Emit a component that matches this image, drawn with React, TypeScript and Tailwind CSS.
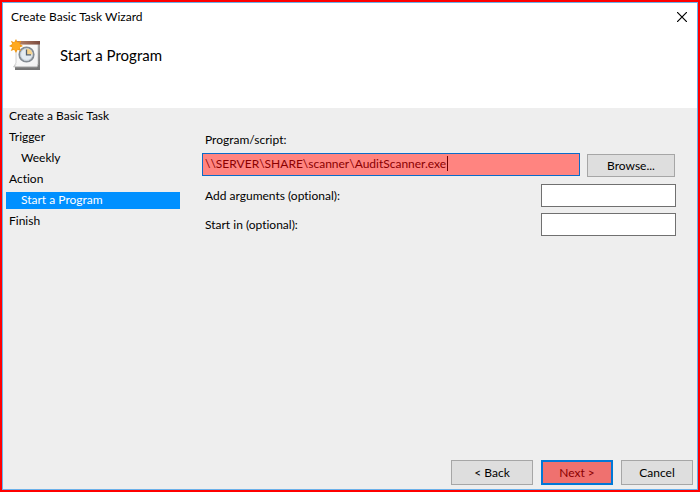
import { useState } from "react";

const steps = [
  { name: "Create a Basic Task", nested: false },
  { name: "Trigger", nested: false },
  { name: "Weekly", nested: true },
  { name: "Action", nested: false },
  { name: "Start a Program", nested: true },
  { name: "Finish", nested: false },
];

function TaskIcon() {
  return (
    <svg width="32" height="32" viewBox="0 0 32 32" aria-hidden="true">
      <defs>
        <linearGradient id="sheet" x1="0" y1="0" x2="1" y2="1">
          <stop offset="0" stopColor="#ffffff" />
          <stop offset="1" stopColor="#f0f0f0" />
        </linearGradient>
        <linearGradient id="band" x1="0" y1="0" x2="1" y2="0">
          <stop offset="0" stopColor="#b98468" />
          <stop offset="1" stopColor="#7a4a3e" />
        </linearGradient>
        <linearGradient id="edge" x1="0" y1="0" x2="0" y2="1">
          <stop offset="0" stopColor="#a8a8a8" />
          <stop offset="1" stopColor="#747474" />
        </linearGradient>
      </defs>
      <path d="M28 3H31V31H6V28H28Z" fill="url(#edge)" />
      <path d="M7 5H29V25L28 28H4.500L7 24Z" fill="url(#sheet)" stroke="#b4b4b4" strokeWidth="0.6" />
      <path d="M7 25.500L5 27.500H28L29 25.500" fill="none" stroke="#c4c4c4" strokeWidth="0.8" />
      <rect x="8" y="2" width="23" height="3.5" fill="url(#band)" />
      <circle cx="17.5" cy="15.5" r="7.2" fill="#e3ebf1" stroke="#848b92" strokeWidth="1.8" />
      <circle cx="17.5" cy="15.5" r="5.9" fill="none" stroke="#c3ccd3" strokeWidth="0.8" />
      <path d="M17.500 15.500V9.500A6 6 0 0 1 23.500 15.500Z" fill="#f8d58d" />
      <path d="M17.500 10.500V15.800H22" fill="none" stroke="#56616c" strokeWidth="1.3" />
      <path
        d="M7 0L8.600 3.300L12.200 1.700L10.800 5.100L14 7L10.800 8.600L12 12L8.600 10.700L7 14L5.200 10.700L1.700 12L3.200 8.600L0 7L3.200 5.100L1.900 1.700L5.200 3.300Z"
        fill="#f39a13"
      />
      <circle cx="7" cy="7" r="4" fill="#ffa91e" />
    </svg>
  );
}

const buttonBase = "shrink-0 border text-center text-xs leading-4";
const plainButton = "border-[#a6a6a6] bg-[#dedede]";
const optionalBox = "h-[23px] w-[135px] border border-[#707070] bg-white px-1 text-xs outline-none";

export default function App() {
  const [program, setProgram] = useState("\\\\SERVER\\SHARE\\scanner\\AuditScanner.exe");
  const [args, setArgs] = useState("");
  const [startIn, setStartIn] = useState("");

  return (
    <div className="min-h-screen flex border-2 border-[#ff0000] font-[Lato,sans-serif] text-xs leading-4 text-black [font-variant-ligatures:none]">
      <div className="flex grow flex-col border border-[#6ab0ea] bg-[#eeeeee]">
        <header className="h-[105px] bg-white">
          <div className="flex items-center justify-between pt-1.5 pr-2.5 pl-2">
            <h1>Create Basic Task Wizard</h1>
            <button type="button" aria-label="Close">
              <svg width="10" height="10" viewBox="0 0 10 10" aria-hidden="true">
                <path d="M0 0L10 10M10 0L0 10" stroke="#000" strokeWidth="1.2" />
              </svg>
            </button>
          </div>
          <div className="flex items-center gap-[19px] pt-3.5 pl-1.5">
            <TaskIcon />
            <h2 className="text-[15px] leading-5">Start a Program</h2>
          </div>
        </header>

        <div className="flex grow">
          <ol className="flex w-[177px] shrink-0 flex-col gap-1 pl-[3px]">
            {steps.map((step) => (
              <li
                key={step.name}
                aria-current={step.name === "Start a Program" ? "step" : undefined}
                className={`h-[17px] ${step.nested ? "pl-[15px]" : "pl-[3px]"} ${
                  step.name === "Start a Program" ? "bg-[#0090ff] text-white" : ""
                }`}
              >
                {step.name}
              </li>
            ))}
          </ol>

          <form className="grow pt-6 pr-[21px] pl-[22px]">
            <label htmlFor="program" className="block h-[21px] pl-[3px]">
              Program/script:
            </label>
            <div className="flex items-end gap-[7px]">
              <div className="relative grow">
                <input
                  id="program"
                  value={program}
                  onChange={(e) => setProgram(e.target.value)}
                  className="block h-[23px] w-full border border-[#0a6cc9] bg-[#ff8480] pr-1 pb-0.5 pl-0.5 text-xs text-[#8b0000] outline-none"
                />
                <span className="absolute top-[3px] left-[245px] h-[15px] w-px bg-[#700000]" />
              </div>
              <button type="button" className={`${buttonBase} ${plainButton} mr-px -mb-px h-[23px] w-[88px]`}>
                Browse...
              </button>
            </div>
            <div className="mt-2 flex items-center justify-between pl-[3px]">
              <label htmlFor="arguments">Add arguments (optional):</label>
              <input id="arguments" value={args} onChange={(e) => setArgs(e.target.value)} className={optionalBox} />
            </div>
            <div className="mt-1.5 flex items-center justify-between pl-[3px]">
              <label htmlFor="start-in">Start in (optional):</label>
              <input id="start-in" value={startIn} onChange={(e) => setStartIn(e.target.value)} className={optionalBox} />
            </div>
          </form>
        </div>

        <footer className="flex justify-end gap-2 pr-1 pb-1">
          <button type="button" className={`${buttonBase} ${plainButton} h-[25px] w-[82px]`}>
            &lt; Back
          </button>
          <button
            type="button"
            className="h-[25px] w-[72px] shrink-0 border-2 border-[#0078d7] bg-[#ef716f] text-center text-xs leading-4 text-[#8b0000]"
          >
            Next &gt;
          </button>
          <button type="button" className={`${buttonBase} ${plainButton} h-[25px] w-[72px]`}>
            Cancel
          </button>
        </footer>
      </div>
    </div>
  );
}
